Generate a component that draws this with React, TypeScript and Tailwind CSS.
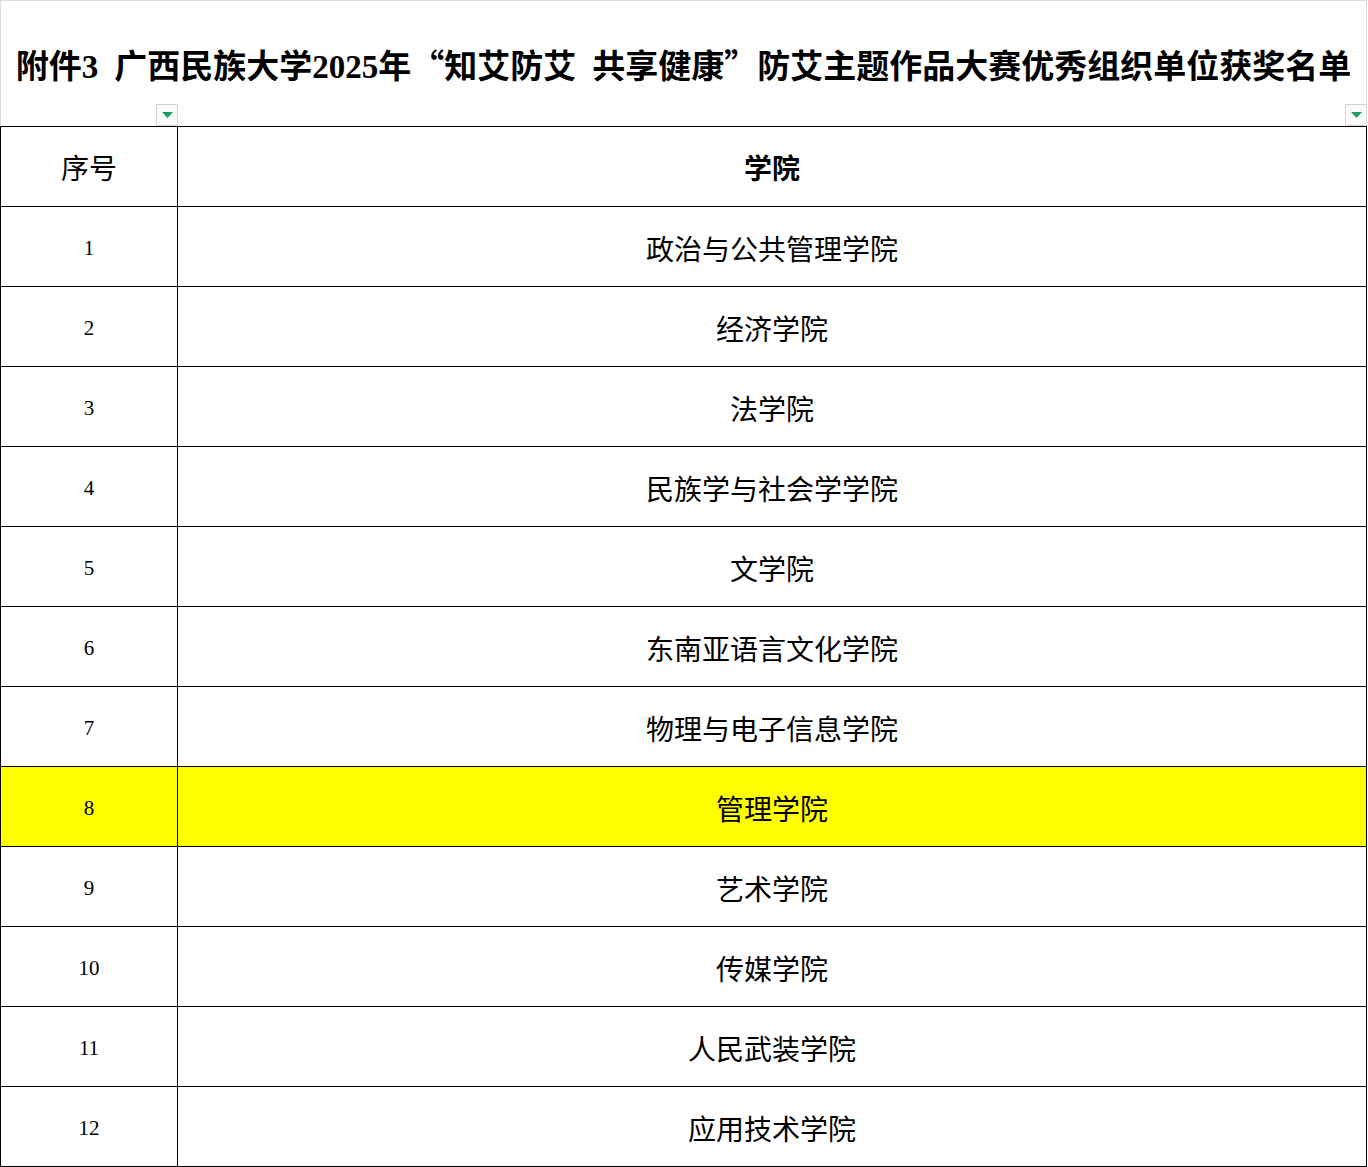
import React from 'react'

const rows = [
  '政治与公共管理学院',
  '经济学院',
  '法学院',
  '民族学与社会学学院',
  '文学院',
  '东南亚语言文化学院',
  '物理与电子信息学院',
  '管理学院',
  '艺术学院',
  '传媒学院',
  '人民武装学院',
  '应用技术学院',
]

const cjk = "font-['Noto_Sans_CJK_SC',sans-serif]"
const num = "font-['Liberation_Serif','Noto_Sans_CJK_SC',serif]"

function FilterButton({ className = '' }: { className?: string }) {
  return (
    <div
      className={`absolute bottom-0 flex h-[22px] w-[22px] items-center justify-center border border-[#d4d4d4] bg-[#fbfbfb] ${className}`}
    >
      <svg width="11" height="6" viewBox="0 0 11 6">
        <path d="M0 0 H11 L5.5 6 Z" fill="#1f9d63" />
      </svg>
    </div>
  )
}

export default function App() {
  return (
    <div className="w-[1368px] bg-white text-black">
      {/* title cell */}
      <div className="relative flex h-[126px] w-[1367px] items-center justify-center border-l border-r border-t border-[#dcdcdc] pt-[5px]">
        <h1 className={`whitespace-nowrap text-[33px] font-bold leading-none ${num}`}>
          附件3<span className="inline-block w-[16px]" />广西民族大学2025年
          <span className={`inline-block w-[33px] text-right ${cjk}`}>“</span>
          知艾防艾<span className="inline-block w-[16px]" />共享健康
          <span className={`inline-block w-[33px] text-left ${cjk}`}>”</span>
          防艾主题作品大赛优秀组织单位获奖名单
        </h1>
        <FilterButton className="left-[155px]" />
        <FilterButton className="right-[-1px]" />
      </div>

      {/* table */}
      <div className="w-[1367px] border-l border-r border-t border-black">
        <div className="grid h-[80px] grid-cols-[177px_1fr] border-b border-black">
          <div className={`flex items-center justify-center border-r border-black text-[28px] ${cjk}`}>
            序号
          </div>
          <div className={`flex items-center justify-center text-[28px] font-bold ${cjk}`}>
            学院
          </div>
        </div>
        {rows.map((name, i) => (
          <div
            key={name}
            className={`grid h-[80px] grid-cols-[177px_1fr] border-b border-black ${
              i === 7 ? 'bg-[#ffff00]' : ''
            }`}
          >
            <div className={`flex items-center justify-center border-r border-black pt-[4px] text-[21px] ${num}`}>
              {i + 1}
            </div>
            <div className={`flex items-center justify-center pt-[2px] text-[28px] ${cjk}`}>
              {name}
            </div>
          </div>
        ))}
      </div>
    </div>
  )
}
